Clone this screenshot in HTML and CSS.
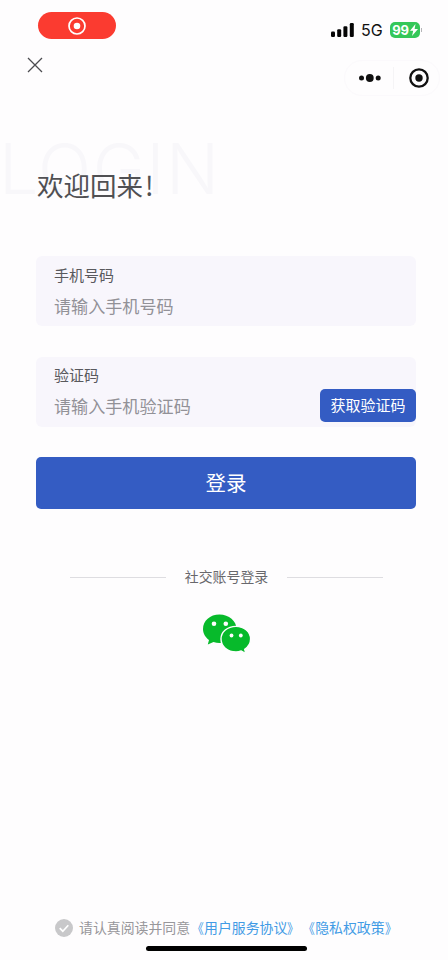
FILE: index.html
```html
<!DOCTYPE html>
<html lang="zh-CN">
<head>
<meta charset="utf-8">
<title>登录</title>
<link rel="stylesheet" href="styles.css">
</head>
<body>
<div class="screen">
  <header class="status">
    <div class="recording">
      <svg width="20" height="20" viewBox="0 0 20 20"><circle cx="10" cy="10" r="8" fill="none" stroke="#fff" stroke-width="1.7"/><circle cx="10" cy="10" r="3.3" fill="#fff"/></svg>
    </div>
    <div class="indicators">
      <svg class="signal" width="24" height="15" viewBox="0 0 24 15" fill="#050505"><rect x="0" y="8.5" width="4" height="5.5" rx="1.2"/><rect x="6.2" y="6.2" width="4" height="7.8" rx="1.2"/><rect x="12.4" y="3.3" width="4" height="10.7" rx="1.2"/><rect x="18.8" y="0" width="4" height="14" rx="1.2"/></svg>
      <span class="network">5G</span>
      <div class="battery"><span>99</span><svg width="8" height="12" viewBox="0 0 8 12"><path d="M5.5 0 0 6.8h3.2L2 12 8 4.9H4.6Z" fill="#fff"/></svg></div>
      <i class="battery-tip"></i>
    </div>
  </header>
  <nav class="nav">
    <svg class="close" width="16" height="16" viewBox="0 0 16 16"><path d="M1 1 15 15M15 1 1 15" stroke="#4c4c50" stroke-width="1.3"/></svg>
    <div class="capsule">
      <svg width="24" height="10" viewBox="0 0 24 10" fill="#111"><circle cx="3.5" cy="5" r="2.5"/><circle cx="11.8" cy="5" r="3.9"/><circle cx="20.2" cy="5" r="2.5"/></svg>
      <i class="divider"></i>
      <svg width="22" height="22" viewBox="0 0 22 22"><circle cx="11" cy="11" r="8.7" fill="none" stroke="#111" stroke-width="2.3"/><circle cx="11" cy="11" r="3.7" fill="#111"/></svg>
    </div>
  </nav>
  <main class="content">
    <div class="hero"><div class="watermark">LOGIN</div><h1>欢迎回来<span>!</span></h1></div>
    <section class="field"><label>手机号码</label><p>请输入手机号码</p></section>
    <section class="field code"><div><label>验证码</label><p>请输入手机验证码</p></div><button class="send">获取验证码</button></section>
    <button class="submit">登录</button>
    <div class="social"><i></i><span>社交账号登录</span><i></i></div>
    <svg class="wechat" width="50" height="40" viewBox="0 0 50 40">
      <path d="M17.5.5C8 .5 1 6.8 1 14.9c0 4.5 2.4 8.5 6 11L5.8 30.6 11.5 28c2 .7 3.9 1 6 1C27 29 34.5 23 34.5 15S27 .5 17.5.5Z" fill="#07ba2b"/>
      <path d="M34 12.4c-8.7 0-15 5.6-15 12.7s6.3 12.8 15 12.8c2 0 3.6-.3 5.2-.9l4.6 2.5-1.1-4.2c3.6-2.3 5.9-6 5.9-10.2 0-7.1-6.3-12.7-14.6-12.7Z" fill="#07ba2b" stroke="#fefdfe" stroke-width="1.4"/>
      <g fill="#fefdfe"><circle cx="12" cy="9.8" r="2.3"/><circle cx="23.8" cy="9.8" r="2.3"/><circle cx="29.5" cy="21.5" r="1.9"/><circle cx="38.8" cy="21.5" r="1.9"/></g>
    </svg>
  </main>
  <footer class="agreement">
    <svg width="18" height="18" viewBox="0 0 18 18"><circle cx="9" cy="9" r="9" fill="#c8c8ca"/><path d="m4.7 9.2 3.1 3 5.5-6" fill="none" stroke="#fff" stroke-width="1.7"/></svg>
    <span>请认真阅读并同意</span><a><b>《</b>用户服务协议<b>》</b></a><a><b>《</b>隐私权政策<b>》</b></a>
  </footer>
  <div class="home"></div>
</div>
</body>
</html>
```

FILE: styles.css
```css
* { box-sizing: border-box; }
body { margin: 0; background: #fefdfe; font-family: "Noto Sans CJK SC", sans-serif; color: #555; }
h1, p { margin: 0; font-weight: 400; }
label { display: block; }
svg { display: block; flex: none; }
button { border: 0; padding: 0; font-family: inherit; color: #fff; background: #345cc3; }
.screen { height: 960px; display: flex; flex-direction: column; overflow: hidden; }
.status { height: 50px; padding: 12px 26px 0 38px; display: flex; justify-content: space-between; }
.recording { width: 78px; height: 27px; border-radius: 14px; background: #fb3b30; display: flex; align-items: center; justify-content: center; }
.indicators { height: 36px; display: flex; align-items: center; }
.network { width: 22px; margin: 0 7px 0 6px; font: 400 16px/20px Inter, sans-serif; color: #111; letter-spacing: -.1px; }
.battery { width: 30px; height: 16px; border-radius: 5px; background: #35c759; display: flex; align-items: center; justify-content: center; gap: 1px; color: #fff; font: 700 13px/16px Inter, sans-serif; letter-spacing: -.3px; }
.battery-tip { width: 1px; height: 4px; margin-left: 1px; background: #b5b5b8; }
.nav { height: 50px; padding: 7px 8px 0 27px; display: flex; justify-content: space-between; }
.capsule { width: 96px; height: 36px; margin-top: 3px; border: 1px solid #fbf9fc; border-radius: 18px; display: flex; align-items: center; padding-left: 13px; }
.divider { width: 1px; height: 22px; margin: 0 14px 0 11px; background: #f5f4f6; }
.content { padding: 0 32px 0 36px; }
.hero { display: grid; height: 156px; }
.watermark { grid-area: 1 / 1; margin: 27px 0 0 -37px; font: 300 70px/84px Inter, sans-serif; letter-spacing: 1.5px; color: #f8f7fa; white-space: nowrap; }
h1 { grid-area: 1 / 1; margin: 65px 0 0 1px; font-size: 26.5px; line-height: 40px; color: #505053; z-index: 1; }
h1 span { margin-left: 2px; }
.field { height: 70px; padding: 8px 0 0 18px; border-radius: 6px; background: #f8f6fc; margin-bottom: 31px; }
.field label { font-size: 15px; line-height: 22px; color: #59595d; }
.field p { margin-top: 8px; font-size: 17.1px; line-height: 24px; color: #929197; }
.code { display: flex; justify-content: space-between; padding-top: 7px; margin-bottom: 30px; }
.send { width: 96px; height: 33px; margin-top: 25px; padding-bottom: 2px; border-radius: 5px; font-size: 15px; line-height: 31px; }
.submit { display: block; width: 380px; height: 52px; padding-bottom: 2px; border-radius: 5px; font-size: 20.5px; line-height: 50px; }
.social { margin: 56px 0 0 34px; height: 24px; display: flex; align-items: center; font-size: 13.9px; line-height: 24px; color: #68686c; }
.social i { width: 96px; height: 1px; background: #dedde1; }
.social span { width: 121px; padding-bottom: 2px; line-height: 22px; text-align: center; }
.wechat { margin: 25px 0 0 166px; }
.agreement { margin-top: auto; margin-bottom: 6px; height: 24px; padding-left: 55px; display: flex; align-items: center; font-size: 13.9px; line-height: 24px; color: #98979b; white-space: nowrap; }
.agreement span { margin-left: 6px; }
.agreement span, .agreement a { height: 25px; line-height: 23px; }
.agreement a { display: flex; color: #429be5; }
.agreement b { width: 13.9px; font-weight: 400; transform: scaleX(.85); transform-origin: right; }
.agreement b:last-child { transform-origin: left; }
.home { width: 161px; height: 5px; margin: 0 0 9px 146px; border-radius: 3px; background: #000; flex: none; }
```
